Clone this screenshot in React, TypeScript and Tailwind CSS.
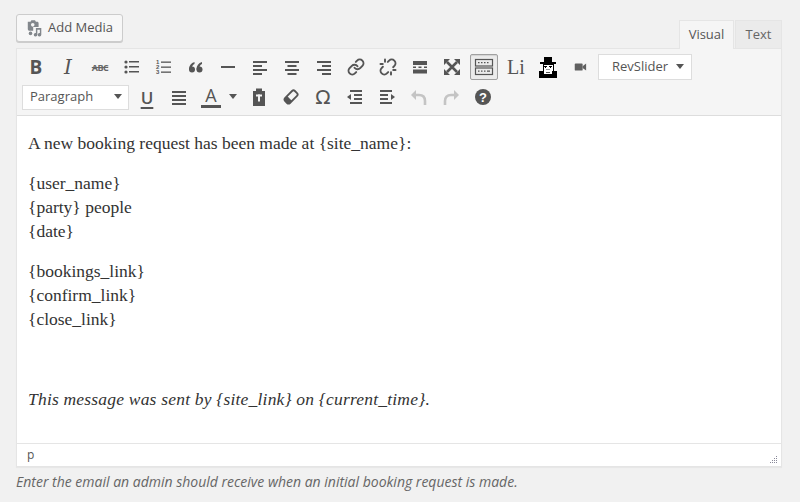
import { Link, Unlink } from 'lucide-react';
import type { ReactNode } from 'react';

const ui = { fontFamily: '"Open Sans", "Liberation Sans", sans-serif' };
const serif = { fontFamily: '"Liberation Serif", "DejaVu Serif", serif' };

function Btn({ children, active = false, w = 'w-[28px]' }: { children: ReactNode; active?: boolean; w?: string }) {
  return (
    <div
      className={`${w} h-[26px] mx-[2px] flex items-center justify-center text-[#555] border rounded-[2px] ${
        active ? 'border-[#a0a0a0] bg-[#ebebeb] shadow-[inset_0_1px_1px_rgba(0,0,0,0.1)]' : 'border-transparent'
      }`}
    >
      {children}
    </div>
  );
}

function Ico({ children, color = '#555' }: { children: ReactNode; color?: string }) {
  return (
    <svg width="20" height="20" viewBox="0 0 20 20" fill={color}>
      {children}
    </svg>
  );
}

const Caret = () => (
  <svg width="8" height="6" viewBox="0 0 8 6" fill="#555">
    <path d="M0 0h8L4 5z" />
  </svg>
);

function MediaIcon() {
  return (
    <svg width="18" height="18" viewBox="0 0 20 20" fill="#82878c">
      <path d="M2 3h3l1-1.5h4L11 3h1.5c.8 0 1.5.7 1.5 1.5V9H2z" />
      <circle cx="7.5" cy="6.5" r="2" fill="#f7f7f7" />
      <path d="M2 9h6v4H3.5C2.7 13 2 12.3 2 11.5z" />
      <path d="M11 10h6v7.5a2 2 0 1 1-1.6-2V12h-2.8v5.5a2 2 0 1 1-1.6-2z" />
      <circle cx="5" cy="16" r="2" />
    </svg>
  );
}

// pixel-art plugin button (hat, face, beard)
function HatGuy() {
  return (
    <svg width="22" height="22" viewBox="0 0 22 22" shapeRendering="crispEdges">
      <rect x="7" y="1" width="8" height="6" fill="#000" />
      <rect x="3" y="6" width="16" height="2" fill="#000" />
      <rect x="6" y="8" width="10" height="7" fill="#fff" stroke="#000" strokeWidth="1" />
      <rect x="7" y="10" width="3" height="1" fill="#000" />
      <rect x="12" y="10" width="3" height="1" fill="#000" />
      <rect x="8" y="11" width="1" height="1" fill="#000" />
      <rect x="13" y="11" width="1" height="1" fill="#000" />
      <rect x="9" y="13" width="4" height="1" fill="#999" />
      <rect x="2" y="15" width="18" height="7" fill="#000" />
      <rect x="7" y="15" width="8" height="3" fill="#fff" />
      <rect x="9" y="16" width="4" height="1" fill="#555" />
    </svg>
  );
}

function Row1() {
  return (
    <div className="flex items-center h-[30px]">
      <Btn>
        <span className="text-[19px] font-bold leading-none" style={ui}>B</span>
      </Btn>
      <Btn>
        <span className="text-[20px] italic leading-none" style={{ fontFamily: '"DejaVu Serif", serif' }}>I</span>
      </Btn>
      <Btn>
        <span className="text-[9px] font-bold leading-none line-through tracking-[-0.5px] text-[#666]" style={ui}>ABC</span>
      </Btn>
      <Btn>
        <Ico>
          <circle cx="4" cy="5" r="1.6" />
          <circle cx="4" cy="10" r="1.6" />
          <circle cx="4" cy="15" r="1.6" />
          <rect x="7" y="4" width="10" height="1.5" />
          <rect x="7" y="9" width="10" height="1.5" />
          <rect x="7" y="14" width="10" height="1.5" />
        </Ico>
      </Btn>
      <Btn>
        <Ico>
          <text x="2" y="7" fontSize="6" fontWeight="bold" fontFamily="Liberation Sans">1</text>
          <text x="2" y="12" fontSize="6" fontWeight="bold" fontFamily="Liberation Sans">2</text>
          <text x="2" y="17" fontSize="6" fontWeight="bold" fontFamily="Liberation Sans">3</text>
          <rect x="7" y="4.5" width="10" height="1.3" />
          <rect x="7" y="9.5" width="10" height="1.3" />
          <rect x="7" y="14.5" width="10" height="1.3" />
        </Ico>
      </Btn>
      <Btn>
        <Ico>
          <circle cx="6" cy="12.5" r="3" />
          <path d="M3 12.5C3 8.5 5 6 8.5 5v2C6.5 8 5.8 9.5 5.8 11.5z" />
          <circle cx="13.5" cy="12.5" r="3" />
          <path d="M10.5 12.5C10.5 8.5 12.5 6 16 5v2c-2 1-2.7 2.5-2.7 4.5z" />
        </Ico>
      </Btn>
      <Btn>
        <Ico>
          <rect x="3" y="9" width="14" height="2" />
        </Ico>
      </Btn>
      <Btn>
        <Ico>
          <rect x="3" y="4" width="14" height="2" />
          <rect x="3" y="8" width="9" height="2" />
          <rect x="3" y="12" width="14" height="2" />
          <rect x="3" y="16" width="9" height="2" />
        </Ico>
      </Btn>
      <Btn>
        <Ico>
          <rect x="3" y="4" width="14" height="2" />
          <rect x="5.5" y="8" width="9" height="2" />
          <rect x="3" y="12" width="14" height="2" />
          <rect x="5.5" y="16" width="9" height="2" />
        </Ico>
      </Btn>
      <Btn>
        <Ico>
          <rect x="3" y="4" width="14" height="2" />
          <rect x="8" y="8" width="9" height="2" />
          <rect x="3" y="12" width="14" height="2" />
          <rect x="8" y="16" width="9" height="2" />
        </Ico>
      </Btn>
      <Btn>
        <Link size={18} strokeWidth={2.6} color="#555" />
      </Btn>
      <Btn>
        <Unlink size={18} strokeWidth={2.6} color="#555" />
      </Btn>
      <Btn>
        <Ico>
          <rect x="3" y="4" width="14" height="4" />
          <rect x="3" y="9.5" width="3" height="1.5" />
          <rect x="8.5" y="9.5" width="3" height="1.5" />
          <rect x="14" y="9.5" width="3" height="1.5" />
          <rect x="3" y="12.5" width="14" height="4" />
        </Ico>
      </Btn>
      <Btn>
        <Ico>
          <path d="M5 5l10 10M15 5L5 15" stroke="#555" strokeWidth="2.6" />
          <path d="M2 2h6L2 8zM18 2v6l-6-6zM2 18v-6l6 6zM18 18h-6l6-6z" />
        </Ico>
      </Btn>
      <Btn active>
        <Ico>
          <rect x="1.5" y="2.5" width="17" height="6.5" fill="none" stroke="#555" strokeWidth="1.2" />
          <rect x="1.5" y="11" width="17" height="6.5" fill="none" stroke="#555" strokeWidth="1.2" />
          <path d="M4 5h1.5v1.3H4zm3 0h1.5v1.3H7zm3 0h1.5v1.3H10zm3 0h1.5v1.3H13zM4 13.5h1.5v1.3H4zm3 0h1.5v1.3H7zm3 0h1.5v1.3H10zm3 0h3v1.3h-3z" />
        </Ico>
      </Btn>
      <Btn>
        <span className="text-[20px] leading-none text-[#555]" style={serif}>Li</span>
      </Btn>
      <Btn>
        <HatGuy />
      </Btn>
      <Btn>
        <svg width="14" height="14" viewBox="0 0 16 16" fill="#606060">
          <rect x="2" y="4" width="9" height="8" rx="1" />
          <path d="M11 7l4-3v8l-4-3z" />
        </svg>
      </Btn>
      <div className="ml-[2px] w-[94px] h-[26px] bg-white border border-[#dddddd] flex items-center pl-[13px] pr-[7px] justify-between">
        <span className="text-[13px] text-[#555]" style={ui}>RevSlider</span>
        <Caret />
      </div>
    </div>
  );
}

function Row2() {
  return (
    <div className="flex items-center h-[30px]">
      <div className="ml-[2px] mr-[2px] w-[107px] h-[25px] bg-white border border-[#dddddd] flex items-center pl-[7px] pr-[6px] justify-between">
        <span className="text-[13px] text-[#555]" style={ui}>Paragraph</span>
        <Caret />
      </div>
      <Btn>
        <span className="text-[17px] leading-none underline decoration-2 underline-offset-[3px] font-semibold" style={ui}>U</span>
      </Btn>
      <Btn>
        <Ico>
          <rect x="3" y="4" width="14" height="2" />
          <rect x="3" y="8" width="14" height="2" />
          <rect x="3" y="12" width="14" height="2" />
          <rect x="3" y="16" width="14" height="2" />
        </Ico>
      </Btn>
      <div className="mx-[2px] flex items-center h-[26px]">
        <div className="w-[28px] flex flex-col items-center justify-center">
          <span className="text-[18px] leading-[18px] text-[#555]" style={ui}>A</span>
          <div className="w-[20px] h-[3px] bg-[#555] mt-[1px]" />
        </div>
        <div className="w-[16px] flex items-center justify-center">
          <Caret />
        </div>
      </div>
      <Btn>
        <Ico>
          <path d="M7 1.5h6V4h3v15H4V4h3z" />
          <rect x="7" y="7.5" width="6" height="2" fill="#f5f5f5" />
          <rect x="9" y="7.5" width="2" height="7" fill="#f5f5f5" />
        </Ico>
      </Btn>
      <Btn>
        <Ico>
          <g transform="rotate(-45 10 10)">
            <rect x="3" y="6.5" width="14" height="7" rx="2" fill="none" stroke="#555" strokeWidth="1.8" />
            <path d="M5 6.5h3v7H5a2 2 0 0 1-2-2v-3a2 2 0 0 1 2-2z" />
          </g>
        </Ico>
      </Btn>
      <Btn>
        <span className="text-[20px] leading-none text-[#555]" style={{ fontFamily: '"DejaVu Sans", sans-serif' }}>Ω</span>
      </Btn>
      <Btn>
        <Ico>
          <rect x="5" y="3" width="12" height="2" />
          <rect x="9" y="7" width="8" height="2" />
          <rect x="9" y="11" width="8" height="2" />
          <rect x="5" y="15" width="12" height="2" />
          <path d="M2 10l4-3v6z" />
        </Ico>
      </Btn>
      <Btn>
        <Ico>
          <rect x="3" y="3" width="12" height="2" />
          <rect x="3" y="7" width="8" height="2" />
          <rect x="3" y="11" width="8" height="2" />
          <rect x="3" y="15" width="12" height="2" />
          <path d="M18 10l-4-3v6z" />
        </Ico>
      </Btn>
      <Btn>
        <Ico color="#c4c4c4">
          <path d="M2 8l5-5v10z" />
          <path d="M6 8h4c4 0 6 2.5 6 6v4" fill="none" stroke="#c4c4c4" strokeWidth="2.6" />
        </Ico>
      </Btn>
      <Btn>
        <Ico color="#c4c4c4">
          <path d="M18 8l-5-5v10z" />
          <path d="M14 8h-4c-4 0-6 2.5-6 6v4" fill="none" stroke="#c4c4c4" strokeWidth="2.6" />
        </Ico>
      </Btn>
      <Btn>
        <svg width="18" height="18" viewBox="0 0 18 18">
          <circle cx="9" cy="9" r="8" fill="#555" />
          <text x="9" y="13.5" textAnchor="middle" fontSize="13" fontWeight="bold" fill="#fff" fontFamily="Liberation Sans">?</text>
        </svg>
      </Btn>
    </div>
  );
}

export default function App() {
  return (
    <div className="w-[800px] h-[502px] bg-[#f1f1f1] pl-4 pr-[18px] pt-[14px]" style={ui}>
      <div className="flex items-end justify-between h-[34px]">
        <div className="self-start h-[28px] flex items-center gap-[4px] px-[9px] bg-[#f7f7f7] border border-[#cccccc] rounded-[3px] shadow-[0_1px_0_#ccc]">
          <MediaIcon />
          <span className="text-[13px] text-[#555]">Add Media</span>
        </div>
        <div className="flex items-end gap-[1px]">
          <div className="relative z-10 -mb-px w-[55px] h-[29px] bg-[#f5f5f5] border border-b-0 border-[#e5e5e5] flex items-center justify-center text-[13px] text-[#555]">
            Visual
          </div>
          <div className="w-[47px] h-[28px] bg-[#ebebeb] border border-b-0 border-[#e5e5e5] flex items-center justify-center text-[13px] text-[#666]">
            Text
          </div>
        </div>
      </div>

      <div className="border border-[#e5e5e5] bg-white shadow-[0_1px_1px_rgba(0,0,0,0.04)]">
        <div className="bg-[#f5f5f5] border-b border-[#dddddd] pt-[3px] pb-[3px] pl-[3px]">
          <Row1 />
          <Row2 />
        </div>

        <div className="h-[327px] pt-[15px] px-[11px] text-[17.5px] leading-[24px] text-[#333]" style={serif}>
          <p className="mb-[16px]">A new booking request has been made at {'{site_name}'}:</p>
          <p className="mb-[16px]">
            {'{user_name}'}
            <br />
            {'{party}'} people
            <br />
            {'{date}'}
          </p>
          <p className="mb-[16px]">
            {'{bookings_link}'}
            <br />
            {'{confirm_link}'}
            <br />
            {'{close_link}'}
          </p>
          <p className="mb-[16px]">&nbsp;</p>
          <p className="italic tracking-[0.2px]">This message was sent by {'{site_link}'} on {'{current_time}'}.</p>
        </div>

        <div className="h-[23px] border-t border-[#e5e5e5] flex items-center justify-between pl-[10px] pr-[3px]">
          <span className="text-[12px] text-[#555]">p</span>
          <svg width="10" height="10" viewBox="0 0 10 10" fill="#8a8a9a" className="self-end mb-[2px]">
            <rect x="8" y="2" width="1" height="1" />
            <rect x="6" y="4" width="1" height="1" />
            <rect x="8" y="4" width="1" height="1" />
            <rect x="4" y="6" width="1" height="1" />
            <rect x="6" y="6" width="1" height="1" />
            <rect x="8" y="6" width="1" height="1" />
            <rect x="2" y="8" width="1" height="1" />
            <rect x="4" y="8" width="1" height="1" />
            <rect x="6" y="8" width="1" height="1" />
            <rect x="8" y="8" width="1" height="1" />
          </svg>
        </div>
      </div>

      <p className="mt-[6px] text-[14px] leading-[18px] italic text-[#666]">
        Enter the email an admin should receive when an initial booking request is made.
      </p>
    </div>
  );
}
